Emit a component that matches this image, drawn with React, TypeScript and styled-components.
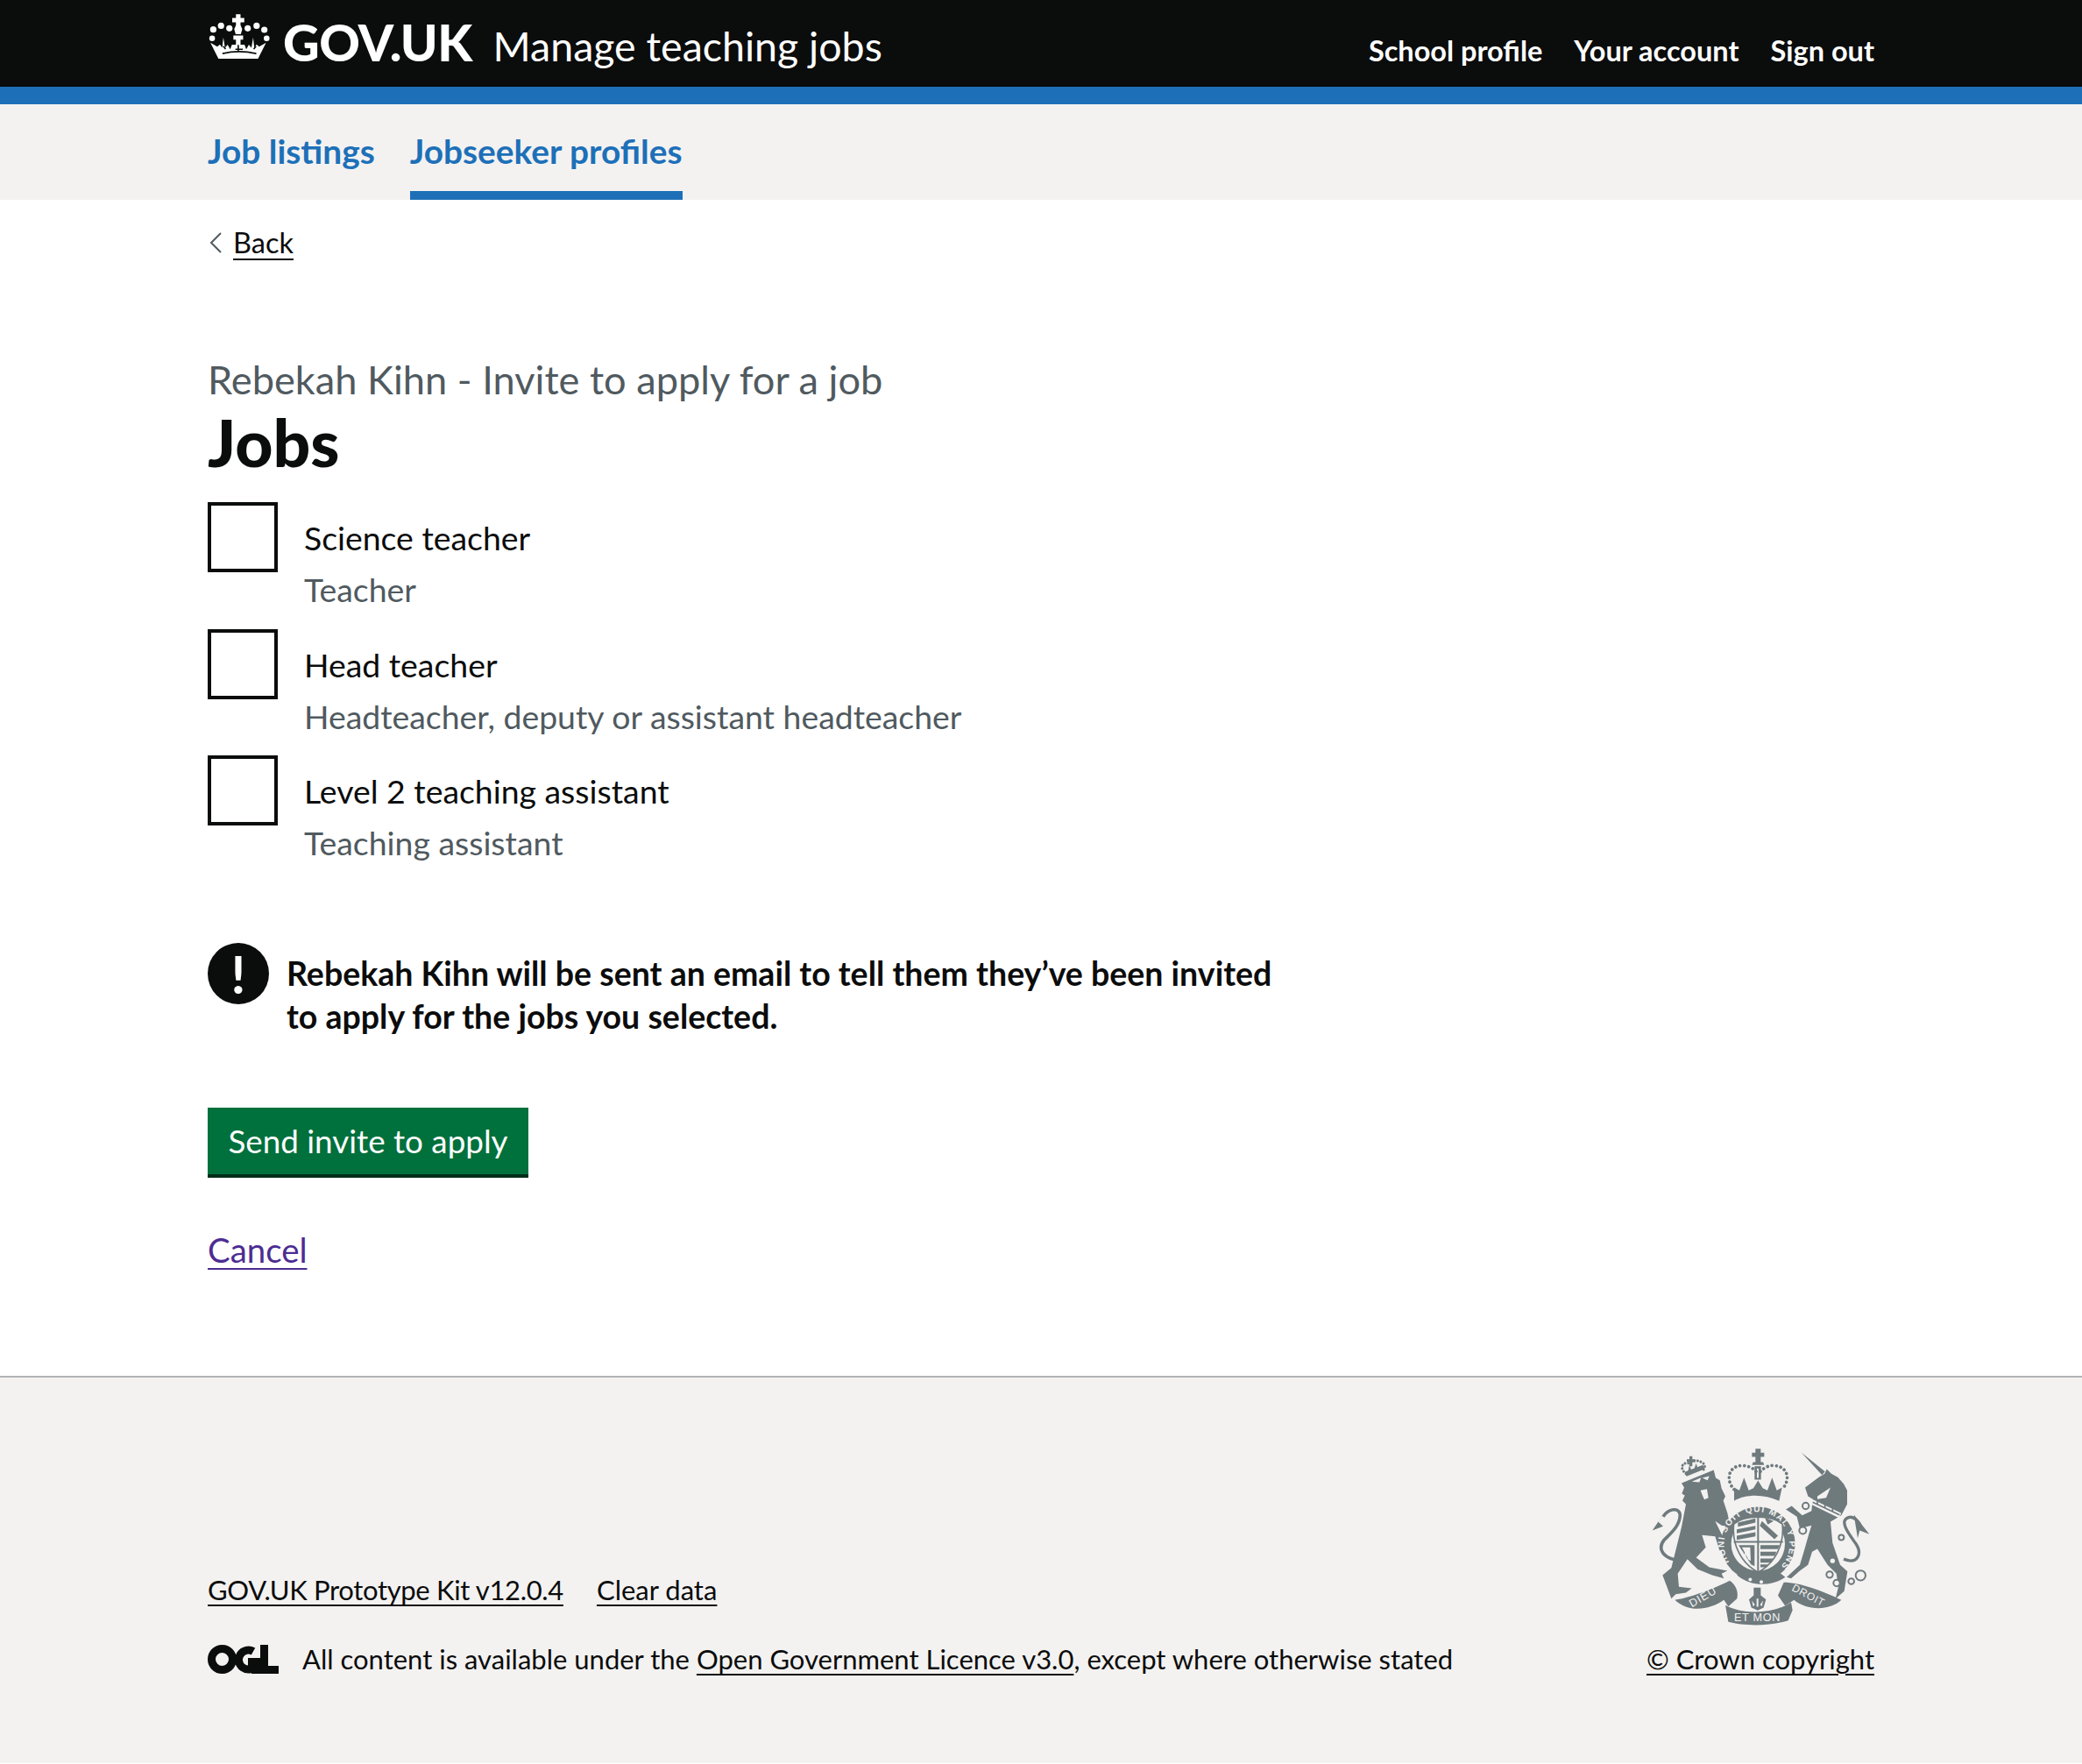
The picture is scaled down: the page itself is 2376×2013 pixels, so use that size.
import React from 'react';
import styled, { createGlobalStyle } from 'styled-components';

const GlobalStyle = createGlobalStyle`
  html, body {
    margin: 0;
    padding: 0;
    background: #fff;
    color: #0b0c0c;
    font-family: Lato, "Noto Sans", sans-serif;
  }
`;

const Container = styled.div`
  width: 1902px;
  margin: 0 auto;
`;

const Header = styled.header`
  height: 99px;
  background: #0b0c0c;
  border-bottom: 20px solid #1d70b8;
`;

const HeaderInner = styled(Container)`
  display: flex;
  justify-content: space-between;
  align-items: flex-start;
`;

const Logo = styled.a`
  display: flex;
  align-items: baseline;
  padding-top: 13px;
  color: #fff;
`;

const CrownMark = styled.svg`
  width: 75px;
  height: 54px;
  margin-right: 11px;
  margin-bottom: -5px;
  flex: none;
`;

const LogoType = styled.span`
  font-size: 57.6px;
  line-height: 70px;
  font-weight: 900;
  letter-spacing: -0.6px;
`;

const ServiceName = styled.span`
  font-size: 46.5px;
  line-height: 70px;
  margin-left: 24px;
`;

const HeaderNav = styled.nav`
  display: flex;
  gap: 36px;
  padding-top: 38px;
`;

const HeaderLink = styled.a`
  color: #fff;
  font-size: 32.5px;
  line-height: 40px;
  font-weight: 700;
`;

const SubNav = styled.div`
  background: #f3f2f1;
  height: 109px;
`;

const SubNavInner = styled(Container)`
  display: flex;
  gap: 40px;
`;

const SubNavLink = styled.a<{ $active?: boolean }>`
  height: 109px;
  box-sizing: border-box;
  padding-top: 28px;
  color: #1d70b8;
  font-size: 38.8px;
  line-height: 50px;
  font-weight: 700;
  border-bottom: 10px solid ${p => (p.$active ? '#1d70b8' : 'transparent')};
`;

const Main = styled(Container)`
  padding-top: 30px;
  padding-bottom: 119px;
`;

const BackLink = styled.a`
  display: flex;
  align-items: center;
  gap: 12px;
  height: 38px;
  font-size: 32.5px;
  line-height: 38px;
  color: #0b0c0c;

  span {
    text-decoration: underline;
    text-decoration-thickness: 2px;
    text-underline-offset: 6px;
  }
`;

const Chevron = styled.svg`
  width: 15px;
  height: 24px;
  margin-left: 2px;
`;

const Caption = styled.div`
  margin-top: 108px;
  font-size: 45.2px;
  line-height: 58px;
  color: #505a5f;
`;

const Heading = styled.h1`
  margin: 2px 0 29px;
  font-size: 75px;
  line-height: 80px;
  font-weight: 900;
`;

const CheckList = styled.div`
  display: flex;
  flex-direction: column;
  gap: 19.5px;
`;

const CheckRow = styled.label`
  display: flex;
  gap: 30px;
`;

const CheckBox = styled.span`
  box-sizing: border-box;
  width: 80px;
  height: 80px;
  border: 4px solid #0b0c0c;
  background: #fff;
  flex: none;
`;

const CheckText = styled.span`
  display: flex;
  flex-direction: column;
  padding-top: 16px;
`;

const CheckLabel = styled.span`
  font-size: 37.4px;
  line-height: 50px;
`;

const CheckHint = styled.span`
  margin-top: 9px;
  font-size: 37.4px;
  line-height: 50px;
  color: #505a5f;
`;

const Warning = styled.div`
  margin-top: 89px;
  display: flex;
  gap: 20px;
`;

const WarningIcon = styled.span`
  width: 70px;
  height: 70px;
  flex: none;
  border-radius: 50%;
  background: #0b0c0c;
  color: #fff;
  font-size: 60px;
  line-height: 70px;
  font-weight: 700;
  text-align: center;
`;

const WarningText = styled.strong`
  width: 1150px;
  padding-top: 11px;
  font-size: 37.5px;
  line-height: 48.5px;
  font-weight: 700;
`;

const SendButton = styled.button`
  display: block;
  margin-top: 80px;
  height: 76px;
  width: 366px;
  padding: 0;
  border: 0;
  background: #00703c;
  box-shadow: 0 4px 0 #002d18;
  color: #fff;
  font-family: inherit;
  font-size: 36.8px;
`;

const CancelLink = styled.a`
  display: block;
  width: fit-content;
  margin-top: 61px;
  font-size: 38.4px;
  line-height: 50px;
  color: #4c2c92;
  text-decoration: underline;
  text-decoration-thickness: 2px;
  text-underline-offset: 6px;
`;

const Footer = styled.footer`
  background: #f3f2f1;
  border-top: 2px solid #b1b4b6;
`;

const FooterInner = styled(Container)`
  display: flex;
  justify-content: space-between;
  align-items: flex-end;
  padding: 77px 0 99px;
`;

const FooterLeft = styled.div`
  display: flex;
  flex-direction: column;
  gap: 39px;
`;

const FooterLinks = styled.div`
  display: flex;
  gap: 38px;
`;

const FooterLink = styled.a<{ $tight?: boolean }>`
  font-size: 31px;
  line-height: 40px;
  letter-spacing: ${p => (p.$tight ? '-0.35px' : '0')};
  color: #0b0c0c;
  text-decoration: underline;
  text-decoration-thickness: 2px;
  text-underline-offset: 5px;
`;

const Licence = styled.div`
  display: flex;
  align-items: center;
  gap: 27px;
  font-size: 31px;
  line-height: 40px;
`;

const OglMark = styled.svg`
  width: 81px;
  height: 33px;
  flex: none;
`;

const FooterRight = styled.div`
  display: flex;
  flex-direction: column;
  align-items: center;
  gap: 17px;
`;

const Arms = styled.svg`
  width: 250px;
  height: 207px;
`;

const CrownLogo = () => (
  <CrownMark viewBox="25 30 220 165" aria-hidden="true">
    <g fill="#fff">
      <path d="M119 31h16v13h13v15h-13v10l6 14-5 17h-18l-5-17 6-14V59h-13V44h13z" />
      <circle cx="40" cy="84" r="11" />
      <circle cx="67" cy="71" r="11" />
      <circle cx="96" cy="80" r="11" />
      <circle cx="160" cy="80" r="11" />
      <circle cx="191" cy="71" r="11" />
      <circle cx="218" cy="85" r="11" />
      <circle cx="36" cy="115" r="10" />
      <circle cx="226" cy="115" r="10" />
      <path d="M30 130l24 14 9-8 8 12 4-36 6 36 9-11 9 16 6-16h14v-18h-9v-14h34v14h-9v18h14l6 16 9-16 9 11 6-36 4 36 8-12 9 8 24-14-28 56H58z" />
    </g>
    <path
      d="M72 168q56-14 118 0M117 153h26M127 138v20M83 152l-8-10M181 152l8-10"
      fill="none"
      stroke="#0b0c0c"
      strokeWidth="5"
    />
  </CrownMark>
);

const OglLogo = () => (
  <OglMark viewBox="0 0 81 33" aria-hidden="true">
    <circle cx="16.5" cy="16.5" r="12" fill="none" stroke="#0b0c0c" strokeWidth="9" />
    <path d="M52 7.5A11 11 0 1 0 55 24" fill="none" stroke="#0b0c0c" strokeWidth="9" />
    <path d="M46 15h14v18H50v-9h-4z" fill="#0b0c0c" />
    <path d="M60 0h9v24h12v9H60z" fill="#0b0c0c" />
  </OglMark>
);

const ink = '#6f7a7d';
const paper = '#f3f2f1';

const RoyalArms = () => (
  <Arms viewBox="130 60 750 620" aria-hidden="true">
    {/* lion */}
    <path
      fill={ink}
      d="M235 190L345 145L352 172L366 180L372 208L385 235L378 250L392 292L402 340L372 335L350 320L372 365L395 400L395 425L365 420L350 372L305 368L318 410L285 445L330 478L392 490L372 500L380 516L340 505L290 485L255 450L222 500L226 545L270 550L250 565L215 570L200 585L185 545L170 505L200 480L215 420L235 340L250 262L238 250L246 232L236 226L244 205Z"
    />
    <path fill={paper} d="M270 185l32-14-6 16zM306 172l24-6-6 14zM300 215l22-5 5 30-14 6-8-18z" />
    <path
      fill="none"
      stroke={ink}
      strokeWidth="11"
      d="M210 452C165 440 155 410 175 385C200 360 230 335 230 298C226 272 190 276 172 305"
    />
    <path fill={ink} d="M182 283L135 352L172 338L155 322Z" />
    {/* lion crown */}
    <path
      fill="none"
      stroke={ink}
      strokeWidth="9"
      strokeLinecap="round"
      strokeDasharray="0.1 11"
      d="M250 158C228 140 236 118 258 122C275 108 300 112 312 125C318 135 312 142 308 146"
    />
    <path fill={ink} d="M262 98h10v10h10v10h-10v14h-10v-14h-9v-10h9zM246 152l62-24 7 13-63 26z" />
    <path fill={ink} d="M262 128l8 22-14 4zM285 122l6 20-14 4z" />
    {/* unicorn */}
    <path fill={ink} d="M645 85L726 150L716 162Z" />
    <path
      fill={ink}
      d="M658 205L705 170L725 158L732 142L748 158L770 170L790 192L802 215L802 262L782 300L745 322L752 395L778 470L803 492L792 560L762 586L772 545L765 500L735 470L700 415L682 425L668 470L640 490L610 516L595 512L640 470L655 420L672 360L680 335L640 345L630 305L592 280L612 268L648 300L680 285L684 245L668 235Z"
    />
    <path fill={paper} d="M700 235L745 205L730 240L700 245Z" />
    <path fill={paper} d="M682 245l100 48-8 16-92-45z" />
    <path fill="none" stroke={ink} strokeWidth="5" d="M684 255l92 44M700 250v14M726 262v14M752 274v14" />
    <path
      fill="none"
      stroke={ink}
      strokeWidth="10"
      d="M790 450C840 470 855 430 830 395C805 360 775 320 805 308C825 300 845 325 850 340"
    />
    <path fill={ink} d="M825 298L878 365L845 352L838 378Z" />
    <g fill={paper} stroke={ink} strokeWidth="6">
      <circle cx="660" cy="268" r="11" />
      <circle cx="650" cy="352" r="12" />
      <circle cx="742" cy="503" r="11" />
      <circle cx="766" cy="532" r="11" />
      <circle cx="816" cy="526" r="10" />
      <circle cx="848" cy="506" r="17" />
      <circle cx="782" cy="376" r="9" />
    </g>
    <g fill={paper}>
      <circle cx="775" cy="422" r="8" />
      <circle cx="752" cy="456" r="8" />
    </g>
    {/* large crown */}
    <path fill={ink} d="M488 72h18v14h12v14h-12v18h-18v-18h-12V86h12zM480 118h34l4 10h-42z" />
    <path fill={ink} d="M485 132h22v46h-22z" />
    <path fill={paper} d="M493 140h6v32h-6z" />
    <path
      fill="none"
      stroke={ink}
      strokeWidth="11"
      strokeLinecap="round"
      strokeDasharray="0.1 15"
      d="M415 212C385 180 395 130 442 130C465 130 482 140 490 150M505 150C515 140 530 128 552 130C600 132 610 180 578 212"
    />
    <path
      fill={ink}
      d="M415 205l18 10 16-44 16 44 16-8 16-26 16 26 16 8 16-44 16 44 18-10-10 46c-50-24-116-24-154 0z"
    />
    <path fill={paper} d="M426 262C470 228 525 228 570 262L564 272C525 243 470 243 432 272Z" />
    {/* shield and garter */}
    <circle cx="497" cy="398" r="127" fill={ink} />
    <circle cx="497" cy="398" r="92" fill={paper} />
    <defs>
      <path id="garter" d="M398 460A112 112 0 1 1 580 470" />
    </defs>
    <text fill={paper} fontFamily="Liberation Sans, sans-serif" fontSize="30" fontWeight="700">
      <textPath href="#garter" textLength="520">
        HONI SOIT QUI MAL Y PENSE
      </textPath>
    </text>
    <path
      fill={paper}
      stroke={ink}
      strokeWidth="5"
      d="M414 330C450 298 545 298 580 330C588 400 555 465 497 495C440 465 406 400 414 330Z"
    />
    <g fill={ink}>
      <path d="M494 300h6v196h-6zM414 388h168v6h-168z" />
      <path d="M428 325l60-14v14l-60 14zM424 348l64-12v12l-64 14zM424 370l64-12v14l-64 12z" />
      <path d="M510 320l55 50-12 12-50-46zM520 308l30 12-20 12z" />
      <path d="M505 402h66l-6 14h-60zM505 425h55l-6 14h-49zM505 448h44l-8 14h-36zM505 468h26l-8 10h-18z" />
      <path d="M430 402h55v72l-12-6z" />
    </g>
    <path fill={paper} d="M442 410l28 0 2 46-8-4zM452 414l4 30-5-3z" />
    {/* garter buckle */}
    <path fill={ink} d="M425 505C470 545 545 545 590 512L560 488C520 512 470 515 440 490Z" />
    <circle cx="470" cy="520" r="6" fill={paper} />
    <circle cx="508" cy="528" r="6" fill={paper} />
    {/* motto scroll */}
    <path
      fill={ink}
      d="M212 590C250 585 330 560 400 524C425 540 430 570 425 585L395 612L380 590C330 625 260 635 212 590Z"
    />
    <path
      fill={ink}
      d="M585 530C640 530 720 560 782 590C740 630 660 625 620 590L590 610L565 575Z"
    />
    <path
      fill={ink}
      d="M385 608C440 640 550 640 610 598L615 625L600 660C540 680 450 680 395 665Z"
    />
    <path fill={ink} d="M482 548h24v26l18 14-8 28-20 10-22-10-8-28 16-14z" />
    <path fill={paper} d="M492 585h6v28h-6zM476 592l10 14-6 6zM514 592l-10 14 6 6z" />
    <g fill={paper} fontFamily="Liberation Sans, sans-serif" fontWeight="400">
      <text x="270" y="616" fontSize="38" transform="rotate(-30 270 616)" letterSpacing="3">
        DIEU
      </text>
      <text x="415" y="664" fontSize="38" letterSpacing="2">
        ET MON
      </text>
      <text x="610" y="556" fontSize="36" transform="rotate(28 610 556)" letterSpacing="2">
        DROIT
      </text>
    </g>
  </Arms>
);

const jobs = [
  { title: 'Science teacher', hint: 'Teacher' },
  { title: 'Head teacher', hint: 'Headteacher, deputy or assistant headteacher' },
  { title: 'Level 2 teaching assistant', hint: 'Teaching assistant' }
];

export default function App() {
  return (
    <>
      <GlobalStyle />
      <Header>
        <HeaderInner>
          <Logo>
            <CrownLogo />
            <LogoType>GOV.UK</LogoType>
            <ServiceName>Manage teaching jobs</ServiceName>
          </Logo>
          <HeaderNav>
            <HeaderLink>School profile</HeaderLink>
            <HeaderLink>Your account</HeaderLink>
            <HeaderLink>Sign out</HeaderLink>
          </HeaderNav>
        </HeaderInner>
      </Header>
      <SubNav>
        <SubNavInner>
          <SubNavLink>Job listings</SubNavLink>
          <SubNavLink $active>Jobseeker profiles</SubNavLink>
        </SubNavInner>
      </SubNav>
      <Main>
        <BackLink>
          <Chevron viewBox="0 0 15 24" aria-hidden="true">
            <path d="M13 1L2 12l11 11" fill="none" stroke="#505a5f" strokeWidth="2" />
          </Chevron>
          <span>Back</span>
        </BackLink>
        <Caption>Rebekah Kihn - Invite to apply for a job</Caption>
        <Heading>Jobs</Heading>
        <CheckList>
          {jobs.map(job => (
            <CheckRow key={job.title}>
              <CheckBox />
              <CheckText>
                <CheckLabel>{job.title}</CheckLabel>
                <CheckHint>{job.hint}</CheckHint>
              </CheckText>
            </CheckRow>
          ))}
        </CheckList>
        <Warning>
          <WarningIcon>!</WarningIcon>
          <WarningText>
            Rebekah Kihn will be sent an email to tell them they’ve been invited to apply for the
            jobs you selected.
          </WarningText>
        </Warning>
        <SendButton>Send invite to apply</SendButton>
        <CancelLink>Cancel</CancelLink>
      </Main>
      <Footer>
        <FooterInner>
          <FooterLeft>
            <FooterLinks>
              <FooterLink $tight>GOV.UK Prototype Kit v12.0.4</FooterLink>
              <FooterLink>Clear data</FooterLink>
            </FooterLinks>
            <Licence>
              <OglLogo />
              <span>
                All content is available under the{' '}
                <FooterLink>Open Government Licence v3.0</FooterLink>, except where otherwise stated
              </span>
            </Licence>
          </FooterLeft>
          <FooterRight>
            <RoyalArms />
            <FooterLink>© Crown copyright</FooterLink>
          </FooterRight>
        </FooterInner>
      </Footer>
    </>
  );
}
